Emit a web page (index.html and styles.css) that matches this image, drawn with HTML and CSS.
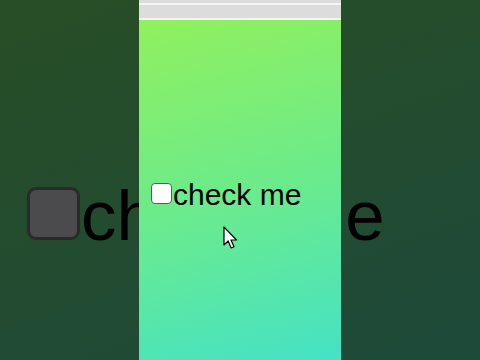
FILE: index.html
```html
<!DOCTYPE html>
<html>
<head>
<meta charset="utf-8">
<link rel="stylesheet" href="styles.css">
</head>
<body>
<div class="backdrop">
  <div class="bg-row">
    <span class="bg-box"></span>
    <span class="bg-text">check me</span>
  </div>
</div>
<div class="phone">
  <div class="bar bar-a"></div>
  <div class="bar-line"></div>
  <div class="bar bar-b"></div>
  <div class="bar-line"></div>
  <div class="stage">
    <label class="row">
      <input type="checkbox" class="cb">
      <span class="label">check me</span>
    </label>
    <svg class="cursor" width="15" height="24" viewBox="0 0 15 24">
      <path d="M1 1 L1 19 L5.2 15 L8.2 22 L11 20.8 L8 14 L13.5 14 Z" fill="#fff" stroke="#000" stroke-width="1.2" stroke-linejoin="round"/>
    </svg>
  </div>
</div>
</body>
</html>
```
FILE: styles.css
```css
html, body {
  margin: 0;
  padding: 0;
}
body {
  width: 480px;
  height: 360px;
  overflow: hidden;
  position: relative;
  background: linear-gradient(160deg, #274e25 0%, #234b2f 50%, #1e4a3b 100%);
  font-family: "Liberation Sans", Arial, sans-serif;
}
.backdrop {
  padding-top: 175px;
  padding-left: 27px;
}
.bg-row {
  display: flex;
  align-items: flex-start;
  gap: 1px;
}
.bg-box {
  width: 47px;
  height: 47px;
  margin-top: 12px;
  background: #4b4a4c;
  border: 3px solid #2a2a2b;
  border-radius: 9px;
  flex: none;
}
.bg-text {
  font-size: 71px;
  color: #000;
  white-space: nowrap;
}
.phone {
  position: absolute;
  left: 139px;
  top: 0;
  width: 202px;
  height: 360px;
  display: flex;
  flex-direction: column;
}
.bar {
  background: #dcdcdc;
}
.bar-a { height: 3px; }
.bar-b { height: 13px; }
.bar-line {
  height: 2px;
  background: #f4f4f4;
}
.stage {
  flex: 1;
  position: relative;
  background: linear-gradient(165deg, #91f05e 0%, #6ceb8a 50%, #45e2c6 100%);
  padding-top: 158px;
  padding-left: 12px;
}
.row {
  display: flex;
  align-items: flex-start;
  gap: 1px;
}
.cb {
  appearance: none;
  -webkit-appearance: none;
  margin: 5px 0 0 0;
  width: 21px;
  height: 21px;
  box-sizing: border-box;
  border: 1.5px solid #5a5a5a;
  border-radius: 4px;
  background: #fff;
  flex: none;
}
.label {
  font-size: 30px;
  color: #000;
  white-space: nowrap;
}
.cursor {
  position: absolute;
  left: 84px;
  top: 206px;
}
```
